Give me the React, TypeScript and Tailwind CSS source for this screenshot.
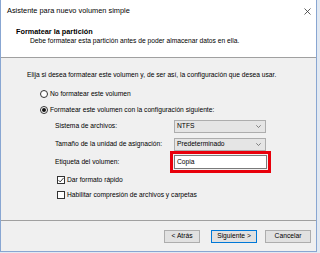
const Radio = ({ checked, label }: { checked?: boolean; label: string }) => (
  <div className="flex h-[10px] items-center pl-[13px]">
    <span className="flex h-[8px] w-[8px] items-center justify-center rounded-full border border-[#333] bg-white">
      {checked && <span className="h-[4px] w-[4px] rounded-full bg-[#111]" />}
    </span>
    <span className="ml-[2px]">{label}</span>
  </div>
);

const Check = ({ checked, label }: { checked?: boolean; label: string }) => (
  <div className="flex h-[10px] items-center pl-[30px]">
    <span className="flex h-[8px] w-[8px] items-center justify-center border border-[#333] bg-white">
      {checked && (
        <svg width="6" height="6" viewBox="0 0 6 6">
          <path d="M0.5 3.2 L2.2 4.9 L5.6 0.9" stroke="#222" strokeWidth="0.9" fill="none" />
        </svg>
      )}
    </span>
    <span className="ml-[2px]">{label}</span>
  </div>
);

const Select = ({ value }: { value: string }) => (
  <div className="flex h-[13px] w-[92px] items-center justify-between border border-[#adadad] bg-[#e5e5e5] pl-[2px] pr-[4px]">
    <span>{value}</span>
    <svg width="5" height="3" viewBox="0 0 5 3">
      <path d="M0.3 0.3 L2.5 2.5 L4.7 0.3" stroke="#555" strokeWidth="0.7" fill="none" />
    </svg>
  </div>
);

const Row = ({ label, children }: { label: string; children: React.ReactNode }) => (
  <div className="flex items-center pl-[28px]">
    <span className="w-[119px]">{label}</span>
    {children}
  </div>
);

export default function App() {
  return (
    <div className="flex h-[253px] w-[320px] bg-[#e2e9f2] text-[6.7px] leading-none text-black [font-family:'Liberation_Sans',Arial,sans-serif]">
      <div className="flex h-[252px] w-[317px] flex-col border-x border-b border-[#88a6d2] bg-[#f0f0f0]">
        <div className="flex h-[22px] items-center justify-between bg-white pl-[6px] pr-[5px]">
          <span className="text-[7.4px]">Asistente para nuevo volumen simple</span>
          <svg width="7" height="7" viewBox="0 0 7 7">
            <path d="M0.5 0.5 L6.5 6.5 M6.5 0.5 L0.5 6.5" stroke="#333" strokeWidth="0.8" />
          </svg>
        </div>
        <div className="flex h-[35px] flex-col bg-white pl-[15px] pt-[6px]">
          <span className="text-[7.3px] font-bold">Formatear la partición</span>
          <span className="ml-[14px] mt-[3px]">Debe formatear esta partición antes de poder almacenar datos en ella.</span>
        </div>
        <div className="h-px bg-[#a0a0a0]" />
        <div className="flex flex-1 flex-col pl-[26px]">
          <div className="mt-[12px] flex h-[10px] items-center">
            Elija si desea formatear este volumen y, de ser así, la configuración que desea usar.
          </div>
          <div className="mt-[9px]">
            <Radio label="No formatear este volumen" />
          </div>
          <div className="mt-[6px]">
            <Radio checked label="Formatear este volumen con la configuración siguiente:" />
          </div>
          <div className="mt-[5px]">
            <Row label="Sistema de archivos:">
              <Select value="NTFS" />
            </Row>
          </div>
          <div className="mt-[5px]">
            <Row label="Tamaño de la unidad de asignación:">
              <Select value="Predeterminado" />
            </Row>
          </div>
          <div className="mt-[4px]">
            <Row label="Etiqueta del volumen:">
              <div className="relative">
                <div className="flex h-[14px] w-[93px] items-center border border-[#7a7a7a] bg-white pl-[2px]">
                  Copia
                </div>
                <div className="absolute -inset-[4px] border-[3px] border-[#e8000b]" />
              </div>
            </Row>
          </div>
          <div className="mt-[6px]">
            <Check checked label="Dar formato rápido" />
          </div>
          <div className="mt-[5px]">
            <Check label="Habilitar compresión de archivos y carpetas" />
          </div>
        </div>
        <div className="h-px bg-[#a0a0a0]" />
        <div className="flex h-[30px] items-start pt-[9px] pl-[163px]">
          <button className="flex h-[13px] w-[36px] items-center justify-center border border-[#adadad] bg-[#e1e1e1]">
            &lt; Atrás
          </button>
          <button className="ml-[11px] flex h-[13px] w-[46px] items-center justify-center border border-[#0078d7] bg-[#e1e1e1]">
            Siguiente &gt;
          </button>
          <button className="ml-[8px] flex h-[13px] w-[46px] items-center justify-center border border-[#adadad] bg-[#e1e1e1]">
            Cancelar
          </button>
        </div>
      </div>
    </div>
  );
}
